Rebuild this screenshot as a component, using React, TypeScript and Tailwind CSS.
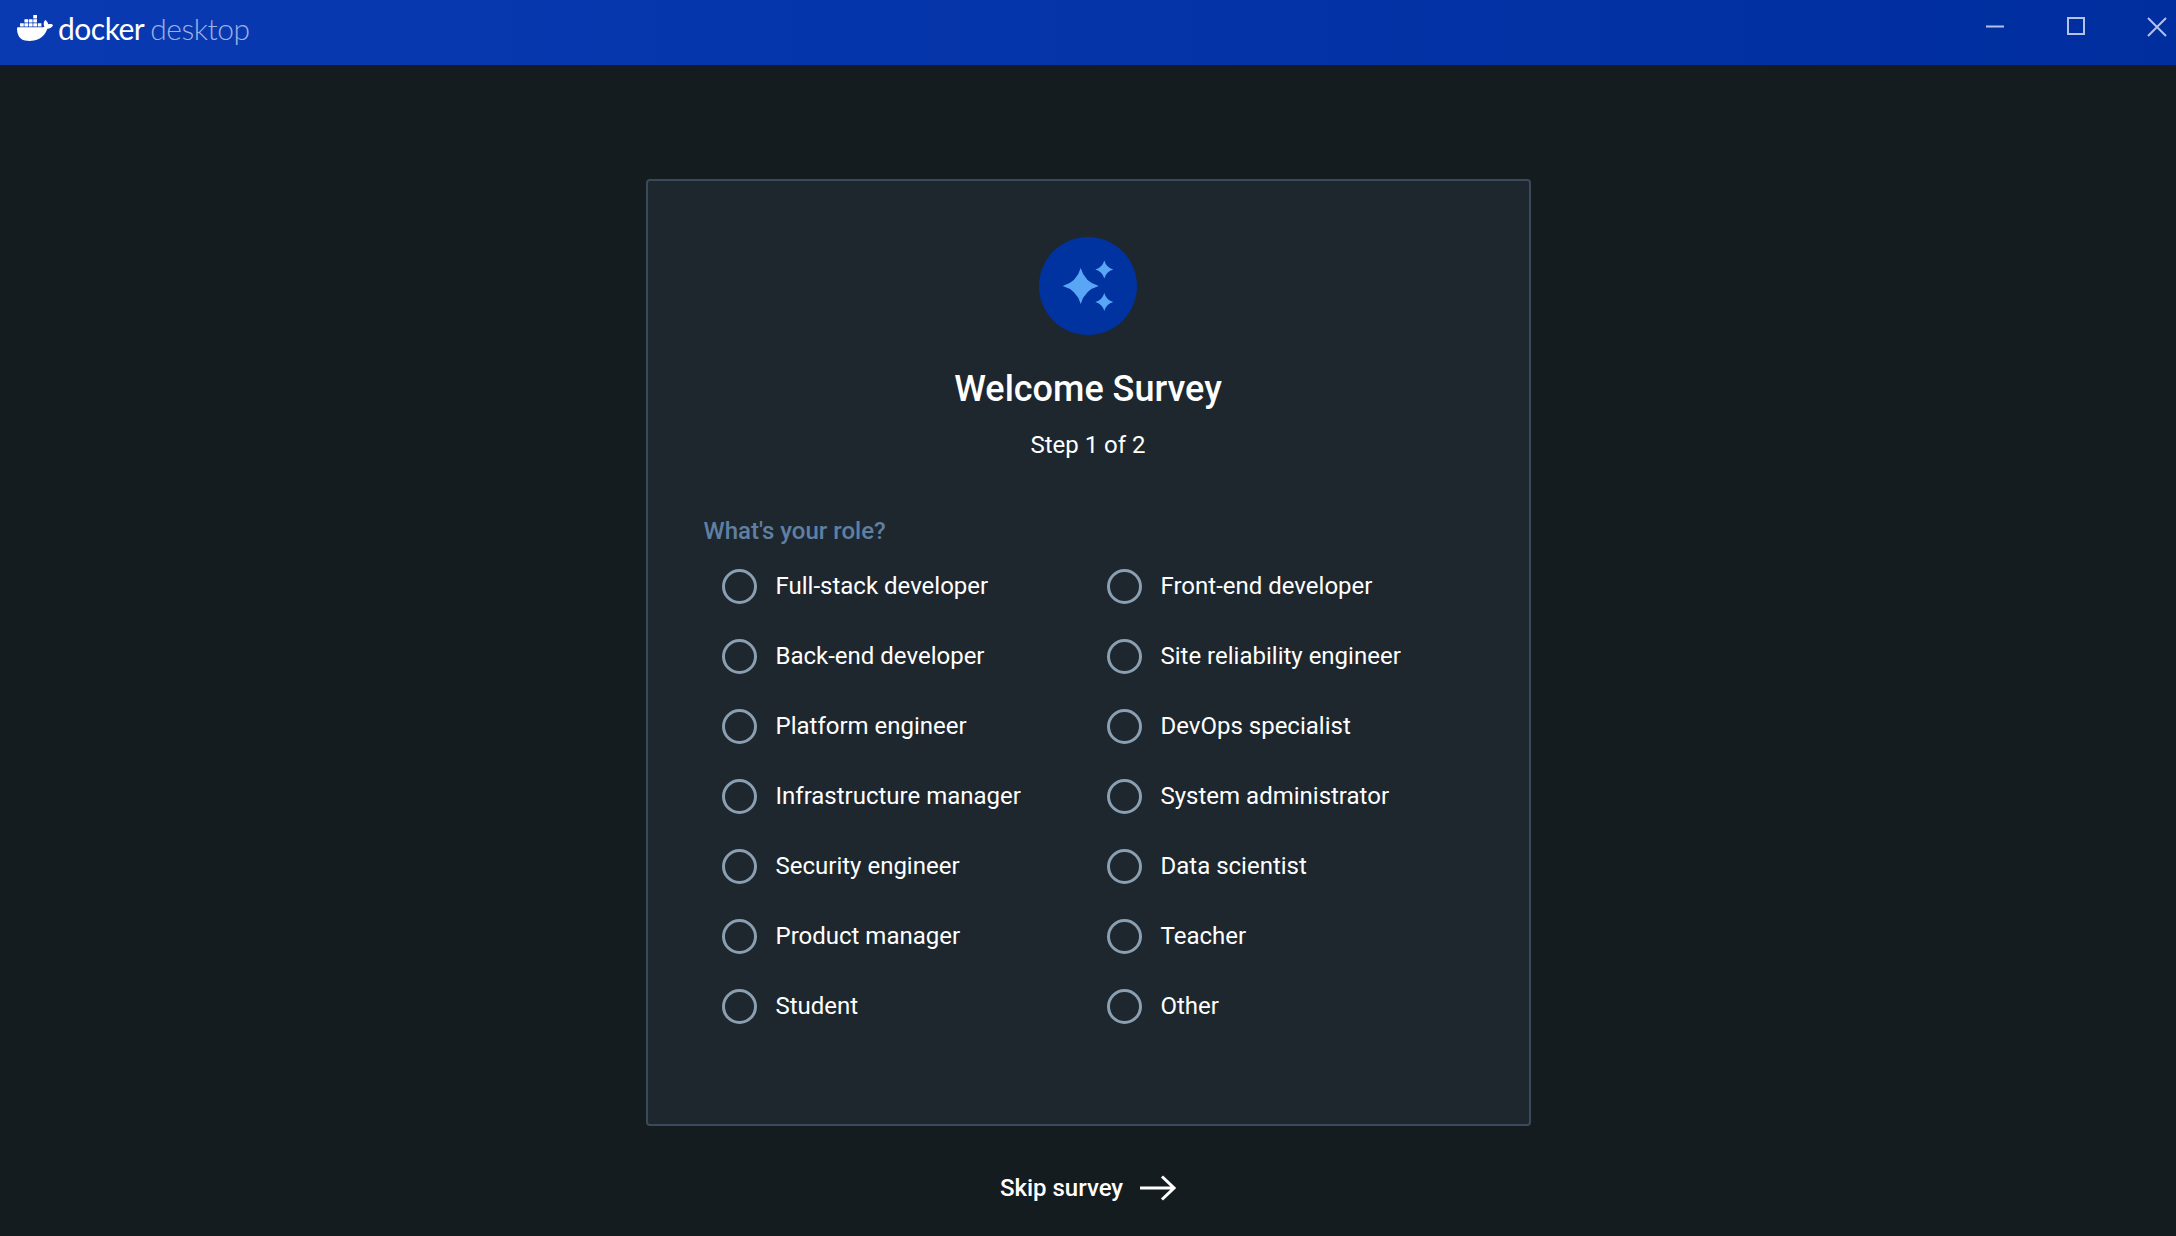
import React from 'react';
import { SiDocker } from 'react-icons/si';

const roles = [
  'Full-stack developer',
  'Front-end developer',
  'Back-end developer',
  'Site reliability engineer',
  'Platform engineer',
  'DevOps specialist',
  'Infrastructure manager',
  'System administrator',
  'Security engineer',
  'Data scientist',
  'Product manager',
  'Teacher',
  'Student',
  'Other',
];

const star = (x: number, y: number, r: number) => {
  const k = r * 0.22;
  return `M${x} ${y - r}Q${x + k} ${y - k} ${x + r} ${y}Q${x + k} ${y + k} ${x} ${y + r}Q${x - k} ${y + k} ${x - r} ${y}Q${x - k} ${y - k} ${x} ${y - r}Z`;
};

const TitleBar = () => (
  <header className="flex h-[65px] items-start justify-between bg-gradient-to-r from-[#0a3ab2] to-[#002e9f]">
    <div className="flex items-center pl-[17px] pt-[10px]">
      <SiDocker className="h-[36px] w-[36px] text-white" />
      <span className="ml-[5px] font-['Lato',sans-serif] text-[30px] leading-[34px] tracking-[-0.5px] text-white">docker</span>
      <span className="ml-[6px] font-['Lato',sans-serif] text-[30px] font-light leading-[34px] tracking-[-0.5px] text-[#9db1e2]">desktop</span>
    </div>
    <div className="flex items-start pt-[17px] text-[#b4c2e8]">
      <svg width="18" height="18" viewBox="0 0 18 18" className="mr-[63px]">
        <path d="M0 9.5h18" stroke="currentColor" strokeWidth="2" />
      </svg>
      <svg width="18" height="18" viewBox="0 0 18 18" className="mr-[62px]">
        <rect x="1" y="1" width="16" height="16" fill="none" stroke="currentColor" strokeWidth="2" />
      </svg>
      <svg width="20" height="20" viewBox="0 0 20 20" className="mr-[9px]">
        <path d="M1 1l18 18M19 1L1 19" stroke="currentColor" strokeWidth="2" />
      </svg>
    </div>
  </header>
);

const RoleOption = ({ label }: { label: string }) => (
  <label className="flex h-[70px] items-center">
    <span className="h-[35px] w-[35px] shrink-0 rounded-full border-[3px] border-[#8a9fb1]" />
    <span className="ml-[19px] text-[24px] leading-[32px] text-white">{label}</span>
  </label>
);

export default function App() {
  return (
    <div className="h-[1236px] overflow-hidden bg-[#151c1f] font-['Roboto',sans-serif]">
      <TitleBar />
      <main className="flex flex-col items-center pt-[114px]">
        <section className="h-[947px] w-[885px] rounded-[4px] border-2 border-[#394a5a] bg-[#1e272e] pl-[56px] pt-[56px]">
          <div className="-ml-[56px] flex flex-col items-center">
            <div className="h-[98px] w-[98px] rounded-full bg-[#0033a0]">
              <svg width="98" height="98" viewBox="0 0 98 98" fill="#5aa6f6">
                <path d={star(41.7, 49, 18)} />
                <path d={star(65.3, 32.5, 9)} />
                <path d={star(65.3, 65, 9)} />
              </svg>
            </div>
            <h1 className="mt-[30px] text-[36px] font-medium leading-[48px] text-white">Welcome Survey</h1>
            <p className="mt-[16px] text-[24px] leading-[32px] text-white">Step 1 of 2</p>
          </div>
          <h2 className="mt-[54px] text-[24px] font-medium leading-[32px] text-[#5f80a3]">What's your role?</h2>
          <div className="ml-[18px] mt-[4px] grid grid-cols-[385px_385px]">
            {roles.map((role) => (
              <RoleOption key={role} label={role} />
            ))}
          </div>
        </section>
        <button className="mt-[46px] flex items-center text-[24px] font-medium leading-[32px] text-white">
          Skip survey
          <svg width="36" height="26" viewBox="0 0 36 26" className="ml-[17px]" fill="none" stroke="white" strokeWidth="3">
            <path d="M0 13h34M22 1.5L34 13 22 24.5" />
          </svg>
        </button>
      </main>
    </div>
  );
}
